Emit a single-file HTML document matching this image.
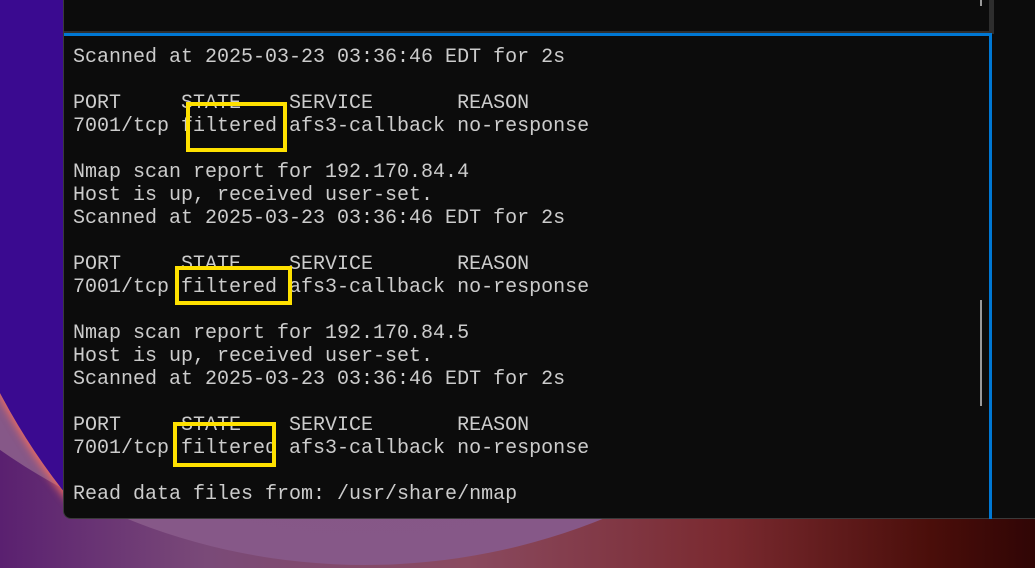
<!DOCTYPE html>
<html><head><meta charset="utf-8"><style>
html,body{margin:0;padding:0;width:1035px;height:568px;overflow:hidden;}
#root{position:relative;width:1035px;height:568px;overflow:hidden;
background:linear-gradient(90deg,#5a2070 0%,#7a4a78 20%,#8a4a60 45%,#7a2a30 70%,#4a0e0a 90%,#300505 100%);}
.clip{position:absolute;left:0;top:0;width:70px;height:568px;overflow:hidden;}
.upper{position:absolute;left:-72px;top:-532px;width:1264px;height:1264px;border-radius:50%;
background:radial-gradient(circle at 50% 50%,#3a0a90 0%,#3a0a90 85%,#5a14b0 95%,#8a30d0 99%);box-shadow:0 5px 8px rgba(255,110,90,0.85);}
.mclip{position:absolute;left:0;top:0;width:1035px;height:568px;overflow:hidden;}
.moon{position:absolute;left:-271px;top:-707px;width:1272px;height:1272px;border-radius:50%;
background:radial-gradient(circle at 50% 50%,#7a5080 0%,#8a5a8a 90%,#b8a888 96%,#d8d8a0 100%);}
.win{position:absolute;left:63px;top:0;width:980px;height:518px;background:#0c0c0c;border-bottom-left-radius:8px;border-left:1px solid #3a3a3a;border-bottom:1px solid #3a3a3a;}
.gray{position:absolute;left:0;top:31px;width:930px;height:3px;background:#2e2e2e;}
.grayv{position:absolute;left:925px;top:0;width:5px;height:34px;background:#2e2e2e;}
.blue{position:absolute;left:0;top:33px;width:928px;height:3px;background:#0078d4;}
.bluev{position:absolute;left:925px;top:33px;width:3px;height:486px;background:#0078d4;}
.thumb1{position:absolute;left:916px;top:0;width:2px;height:6px;background:#9a9a9a;}
.thumb2{position:absolute;left:916px;top:300px;width:2px;height:106px;background:#9a9a9a;}
pre{position:absolute;left:9px;top:46px;margin:0;font-family:"Liberation Mono",monospace;font-size:20px;line-height:23px;color:#cccccc;}
.box{position:absolute;border:4px solid #ffe100;box-sizing:border-box;}
</style></head><body><div id="root">
<div class="mclip"><div class="moon"></div></div>
<div class="clip"><div class="upper"></div></div>
<div class="win">
<div class="gray"></div><div class="grayv"></div>
<div class="blue"></div><div class="bluev"></div>
<div class="thumb1"></div><div class="thumb2"></div>
<pre>Scanned at 2025-03-23 03:36:46 EDT for 2s

PORT     STATE    SERVICE       REASON
7001/tcp filtered afs3-callback no-response

Nmap scan report for 192.170.84.4
Host is up, received user-set.
Scanned at 2025-03-23 03:36:46 EDT for 2s

PORT     STATE    SERVICE       REASON
7001/tcp filtered afs3-callback no-response

Nmap scan report for 192.170.84.5
Host is up, received user-set.
Scanned at 2025-03-23 03:36:46 EDT for 2s

PORT     STATE    SERVICE       REASON
7001/tcp filtered afs3-callback no-response

Read data files from: /usr/share/nmap</pre>
</div>
<div class="box" style="left:186px;top:102px;width:101px;height:50px"></div>
<div class="box" style="left:175px;top:266px;width:117px;height:39px"></div>
<div class="box" style="left:173px;top:422px;width:103px;height:45px"></div>
</div></body></html>
